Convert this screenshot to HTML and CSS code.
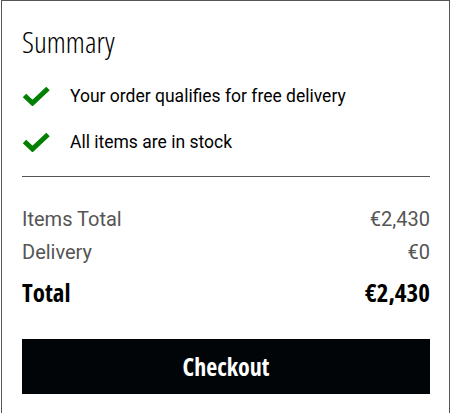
FILE: index.html
```html
<!DOCTYPE html>
<html>
<head>
<meta charset="utf-8">
<link rel="stylesheet" href="styles.css">
</head>
<body>
<div class="card">
  <h2 class="title">Summary</h2>
  <ul class="checks">
    <li class="check">
      <svg class="tick" viewBox="0 0 28 20" width="28" height="20"><path d="M2.5 9.5 L10.5 17 L26 2.5" fill="none" stroke="#008000" stroke-width="5"/></svg>
      <span>Your order qualifies for free delivery</span>
    </li>
    <li class="check">
      <svg class="tick" viewBox="0 0 28 20" width="28" height="20"><path d="M2.5 9.5 L10.5 17 L26 2.5" fill="none" stroke="#008000" stroke-width="5"/></svg>
      <span>All items are in stock</span>
    </li>
  </ul>
  <hr class="divider">
  <div class="row"><span>Items Total</span><span>€2,430</span></div>
  <div class="row"><span>Delivery</span><span>€0</span></div>
  <div class="row total"><span>Total</span><span>€2,430</span></div>
  <button class="checkout">Checkout</button>
</div>
</body>
</html>
```
FILE: styles.css
```css
html, body { margin: 0; padding: 0; background: #fff; }
.card {
  width: 449px;
  margin-left: 1px;
  box-sizing: border-box;
  border: 1px solid #555;
  padding: 21px 19px 40px 20px;
}
.title {
  margin: 0;
  font-family: "Open Sans", sans-serif;
  font-stretch: 75%;
  font-weight: 300;
  font-size: 30px;
  line-height: 40px;
  color: #000;
}
.checks { list-style: none; margin: 11px 0 0; padding: 0; }
.check {
  display: flex;
  align-items: center;
  height: 46px;
  font-family: Roboto, sans-serif;
  font-size: 17.5px;
  color: #000;
}
.tick { margin-right: 20px; flex: none; }
.divider { border: 0; border-top: 1px solid #555; margin: 11px 0 26px; }
.row {
  display: flex;
  justify-content: space-between;
  font-family: Roboto, sans-serif;
  font-size: 20px;
  color: #555;
  line-height: 33px;
}
.row.total {
  font-family: "Open Sans", sans-serif;
  font-stretch: 75%;
  font-weight: 700;
  font-size: 25px;
  color: #000;
  line-height: 46px;
}
.checkout {
  display: block;
  width: 100%;
  height: 55px;
  margin-top: 24px;
  background: #020508;
  color: #fff;
  border: 0;
  font-family: "Open Sans", sans-serif;
  font-stretch: 75%;
  font-weight: 700;
  font-size: 24px;
}
```
